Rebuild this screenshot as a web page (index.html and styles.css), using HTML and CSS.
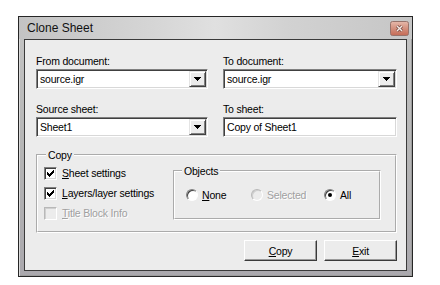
FILE: index.html
```html
<!DOCTYPE html>
<html lang="en">

<head>
    <meta charset="UTF-8">
    <title>Clone Sheet</title>
    <link rel="stylesheet" href="styles.css">
</head>

<body>

    <div class="window">
        <div class="titlebar">
            <span class="title">Clone Sheet</span>
            <span class="close-btn">
                <svg width="19" height="15" viewBox="0 0 19 15">
                    <defs>
                        <linearGradient id="closeGrad" x1="0" y1="0" x2="0" y2="1">
                            <stop offset="0" stop-color="#e6b9ab"/>
                            <stop offset="0.5" stop-color="#d3907e"/>
                            <stop offset="1" stop-color="#c56a55"/>
                        </linearGradient>
                    </defs>
                    <rect x="0.5" y="0.5" width="18" height="14" rx="2" fill="url(#closeGrad)" stroke="#97736b"/>
                    <path d="M7 5l5 5M12 5l-5 5" stroke="#7a4c42" stroke-width="3"/>
                    <path d="M7 5l5 5M12 5l-5 5" stroke="#f4eae7" stroke-width="1.4"/>
                </svg>
            </span>
        </div>

        <div class="client">
            <div class="fields">
                <div class="field">
                    <label>From document:</label>
                    <div class="combo">
                        <span class="combo-text">source.igr</span>
                        <span class="drop"><svg width="7" height="4" viewBox="0 0 7 4"><path d="M0 0h7v1h-1v1h-1v1h-1v1h-1v-1h-1v-1h-1v-1h-1z"/></svg></span>
                    </div>
                </div>
                <div class="field">
                    <label>To document:</label>
                    <div class="combo">
                        <span class="combo-text">source.igr</span>
                        <span class="drop"><svg width="7" height="4" viewBox="0 0 7 4"><path d="M0 0h7v1h-1v1h-1v1h-1v1h-1v-1h-1v-1h-1v-1h-1z"/></svg></span>
                    </div>
                </div>
                <div class="field">
                    <label>Source sheet:</label>
                    <div class="combo">
                        <span class="combo-text">Sheet1</span>
                        <span class="drop"><svg width="7" height="4" viewBox="0 0 7 4"><path d="M0 0h7v1h-1v1h-1v1h-1v1h-1v-1h-1v-1h-1v-1h-1z"/></svg></span>
                    </div>
                </div>
                <div class="field">
                    <label>To sheet:</label>
                    <div class="combo">
                        <span class="combo-text">Copy of Sheet1</span>
                    </div>
                </div>
            </div>

            <fieldset class="group group-copy">
                <legend>Copy</legend>
                <div class="copy-body">
                    <div class="checks">
                        <div class="check-row">
                            <span class="checkbox"><svg width="7" height="7" viewBox="0 0 7 7"><path d="M6 0h1v1h-1zM5 1h2v1h-2zM0 2h1v1h-1zM4 2h3v1h-3zM0 3h2v1h-2zM3 3h3v1h-3zM0 4h5v1h-5zM1 5h3v1h-3zM2 6h1v1h-1z"/></svg></span>
                            <span><u>S</u>heet settings</span>
                        </div>
                        <div class="check-row">
                            <span class="checkbox"><svg width="7" height="7" viewBox="0 0 7 7"><path d="M6 0h1v1h-1zM5 1h2v1h-2zM0 2h1v1h-1zM4 2h3v1h-3zM0 3h2v1h-2zM3 3h3v1h-3zM0 4h5v1h-5zM1 5h3v1h-3zM2 6h1v1h-1z"/></svg></span>
                            <span><u>L</u>ayers/layer settings</span>
                        </div>
                        <div class="check-row disabled">
                            <span class="checkbox"></span>
                            <span><u>T</u>itle Block Info</span>
                        </div>
                    </div>

                    <fieldset class="group group-objects">
                        <legend>Objects</legend>
                        <div class="radios">
                            <div class="radio-item item-none">
                                <span class="radio"></span>
                                <span><u>N</u>one</span>
                            </div>
                            <div class="radio-item item-selected disabled">
                                <span class="radio"></span>
                                <span>Selected</span>
                            </div>
                            <div class="radio-item">
                                <span class="radio checked"></span>
                                <span>All</span>
                            </div>
                        </div>
                    </fieldset>
                </div>
            </fieldset>

            <div class="buttons">
                <button class="btn"><u>C</u>opy</button>
                <button class="btn"><u>E</u>xit</button>
            </div>
        </div>
    </div>

</body>

</html>
```

FILE: styles.css
```css
body {
    margin: 0;
    background: #fff;
    font-family: "Liberation Sans", Arial, sans-serif;
    font-size: 10.5px;
    letter-spacing: -0.2px;
    color: #000;
}

.window {
    box-sizing: border-box;
    width: 395px;
    height: 261px;
    margin: 16px 0 0 18px;
    border: 1px solid #262626;
    background: linear-gradient(to bottom, #c4c4c4, #b6b6b6 50%, #aaa8ad);
    box-shadow: inset 1px 1px 0 #dadada, inset -1px -1px 0 #9c9c9c;
}

.titlebar {
    display: flex;
    align-items: center;
    justify-content: space-between;
    height: 22px;
    padding: 0 3px 0 8px;
    background: linear-gradient(to right, #c3c3c3 0%, #d6d6d6 35%, #e0e0e0 50%, #d2d2d2 68%, #c6c6c6 100%);
}

.title {
    font-size: 12px;
    letter-spacing: 0;
    color: #111;
}

.close-btn {
    display: flex;
}

.client {
    box-sizing: border-box;
    height: 232px;
    margin: 0 5px;
    padding: 14px 9px 0 11px;
    border: 1px solid #3a3a3a;
    background: #ececec;
}

.fields {
    display: grid;
    grid-template-columns: 172px 174px;
    column-gap: 15px;
    row-gap: 13px;
}

.field label {
    display: block;
    line-height: 14px;
    margin-bottom: 1px;
}

.combo {
    box-sizing: border-box;
    display: flex;
    align-items: center;
    height: 20px;
    padding: 1px;
    border: 1px solid;
    border-color: #808080 #fff #fff #808080;
    box-shadow: inset 1px 1px 0 #404040, inset -1px -1px 0 #d8d8d8;
    background: #fff;
}

.combo-text {
    flex: 1;
    padding-left: 2px;
}

.drop {
    box-sizing: border-box;
    display: flex;
    align-items: center;
    justify-content: center;
    width: 17px;
    height: 16px;
    border: 1px solid;
    border-color: #e4e4e4 #404040 #404040 #e4e4e4;
    box-shadow: inset 1px 1px 0 #fff, inset -1px -1px 0 #808080;
    background: #ececec;
}

.drop svg {
    shape-rendering: crispEdges;
}

.group {
    margin: 0;
    min-width: 0;
    border: 2px groove #fff;
}

.group legend {
    line-height: 14px;
    padding: 0 2px;
}

.group-copy {
    margin-top: 11px;
    padding: 1px 0 8px 6px;
}

.group-copy legend {
    margin-left: 2px;
}

.copy-body {
    display: flex;
    align-items: flex-start;
}

.checks {
    width: 129px;
}

.check-row {
    display: flex;
    align-items: center;
    height: 20px;
}

.checkbox {
    box-sizing: border-box;
    display: flex;
    align-items: center;
    justify-content: center;
    width: 13px;
    height: 13px;
    margin-right: 5px;
    border: 1px solid;
    border-color: #808080 #fff #fff #808080;
    box-shadow: inset 1px 1px 0 #404040, inset -1px -1px 0 #d8d8d8;
    background: #fff;
}

.checkbox svg {
    shape-rendering: crispEdges;
}

.disabled {
    color: #a0a0a0;
    text-shadow: 1px 1px 0 #fff;
}

.disabled .checkbox,
.disabled .radio {
    border-color: #b8b8b8 #fff #fff #b8b8b8;
    box-shadow: inset 1px 1px 0 #cfcfcf;
    background: #ececec;
}

.group-objects {
    width: 208px;
    box-sizing: border-box;
    margin-top: 1px;
    padding: 7px 0 13px 11px;
}

.group-objects legend {
    margin-left: -4px;
}

.radios {
    display: flex;
    align-items: center;
    height: 20px;
}

.radio-item {
    display: flex;
    align-items: center;
}

.item-none {
    width: 65px;
}

.item-selected {
    width: 73px;
}

.radio {
    box-sizing: border-box;
    display: flex;
    align-items: center;
    justify-content: center;
    width: 12px;
    height: 12px;
    margin-right: 4px;
    border: 1px solid;
    border-color: #808080 #fff #fff #808080;
    border-radius: 50%;
    box-shadow: inset 1px 1px 0 #404040;
    background: #fff;
}

.radio.checked::after {
    content: "";
    width: 4px;
    height: 4px;
    border-radius: 50%;
    background: #000;
}

.buttons {
    display: flex;
    justify-content: flex-end;
    gap: 7px;
    margin-top: 7px;
}

.btn {
    box-sizing: border-box;
    width: 73px;
    height: 21px;
    padding: 0;
    border: 1px solid;
    border-color: #fff #3a3a3a #3a3a3a #fff;
    box-shadow: inset -1px -1px 0 #9a9a9a;
    background: #ececec;
    font-family: "Liberation Sans", Arial, sans-serif;
    font-size: 10.5px;
    letter-spacing: -0.2px;
    color: #000;
}
```
